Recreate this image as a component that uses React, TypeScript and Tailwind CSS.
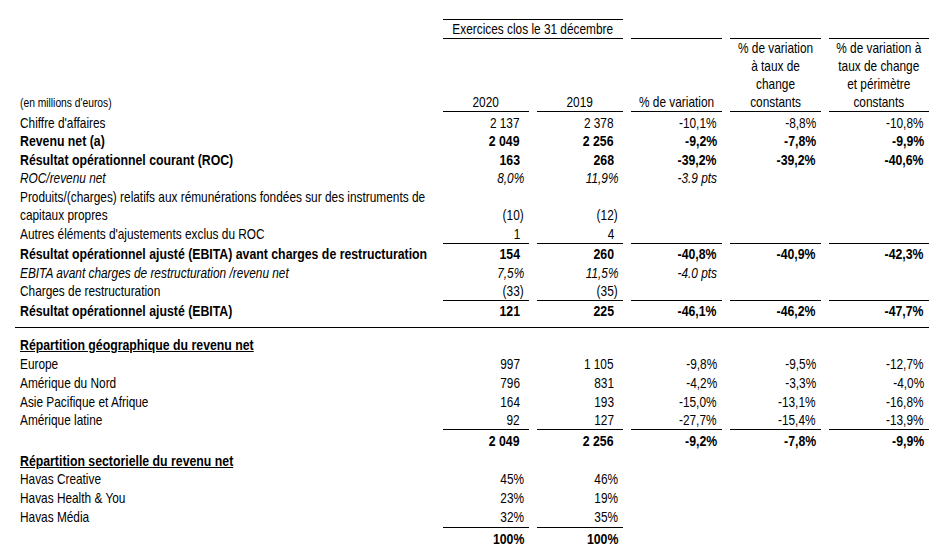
import type { ReactNode } from 'react'

type Row = {
  label: string
  values?: string[]
  h: string
  kind?: 'bold' | 'italic' | 'heading'
  line?: number
}

const topRows: Row[] = [
  { label: "Chiffre d'affaires", values: ['2 137', '2 378', '-10,1%', '-8,8%', '-10,8%'], h: 'h-[19px]' },
  { label: 'Revenu net (a)', values: ['2 049', '2 256', '-9,2%', '-7,8%', '-9,9%'], h: 'h-[18px]', kind: 'bold' },
  { label: 'Résultat opérationnel courant (ROC)', values: ['163', '268', '-39,2%', '-39,2%', '-40,6%'], h: 'h-[19px]', kind: 'bold' },
  { label: 'ROC/revenu net', values: ['8,0%', '11,9%', '-3.9 pts'], h: 'h-[18px]', kind: 'italic' },
  { label: 'Produits/(charges) relatifs aux rémunérations fondées sur des instruments de', h: 'h-[19px]' },
  { label: 'capitaux propres', values: ['(10)', '(12)'], h: 'h-[18px]' },
  { label: "Autres éléments d'ajustements exclus du ROC", values: ['1', '4'], h: 'h-[19px]' },
  {
    label: 'Résultat opérationnel ajusté (EBITA) avant charges de restructuration',
    values: ['154', '260', '-40,8%', '-40,9%', '-42,3%'],
    h: 'h-[21px]',
    kind: 'bold',
    line: 5,
  },
  { label: 'EBITA avant charges de restructuration /revenu net', values: ['7,5%', '11,5%', '-4.0 pts'], h: 'h-[18px]', kind: 'italic' },
  { label: 'Charges de restructuration', values: ['(33)', '(35)'], h: 'h-[18px]' },
  { label: 'Résultat opérationnel ajusté (EBITA)', values: ['121', '225', '-46,1%', '-46,2%', '-47,7%'], h: 'h-[21px]', kind: 'bold', line: 5 },
]

const bottomRows: Row[] = [
  { label: 'Répartition géographique du revenu net', h: 'h-[18px]', kind: 'heading' },
  { label: 'Europe', values: ['997', '1 105', '-9,8%', '-9,5%', '-12,7%'], h: 'h-[19px]' },
  { label: 'Amérique du Nord', values: ['796', '831', '-4,2%', '-3,3%', '-4,0%'], h: 'h-[19px]' },
  { label: 'Asie Pacifique et Afrique', values: ['164', '193', '-15,0%', '-13,1%', '-16,8%'], h: 'h-[19px]' },
  { label: 'Amérique latine', values: ['92', '127', '-27,7%', '-15,4%', '-13,9%'], h: 'h-[18px]' },
  { label: '', values: ['2 049', '2 256', '-9,2%', '-7,8%', '-9,9%'], h: 'h-[23px]', kind: 'bold', line: 5 },
  { label: 'Répartition sectorielle du revenu net', h: 'h-[17px]', kind: 'heading' },
  { label: 'Havas Creative', values: ['45%', '46%'], h: 'h-[19px]' },
  { label: 'Havas Health & You', values: ['23%', '19%'], h: 'h-[19px]' },
  { label: 'Havas Média', values: ['32%', '35%'], h: 'h-[20px]' },
  { label: '', values: ['100%', '100%'], h: 'h-[22px]', kind: 'bold', line: 2 },
]

const grid = 'grid grid-cols-[420px_86px_86px_91px_91px_100px] gap-x-2'

// Liberation Sans squeezed to the width of the condensed face used in the report
function Narrow({
  children,
  origin = 'origin-center',
  bold = false,
  className = '',
}: {
  children: ReactNode
  origin?: string
  bold?: boolean
  className?: string
}) {
  const squeeze = bold ? 'scale-x-[0.82]' : 'scale-x-[0.79]'
  return <span className={`inline-block whitespace-nowrap ${squeeze} ${origin} ${className}`}>{children}</span>
}

function TableRow({ row }: { row: Row }) {
  const bold = row.kind === 'bold' || row.kind === 'heading'
  const tone =
    row.kind === 'bold' ? 'font-bold' : row.kind === 'italic' ? 'italic' : row.kind === 'heading' ? 'font-bold underline' : ''
  return (
    <div className={`${grid} ${row.h}`}>
      <div className="flex items-center pl-[5px]">
        <Narrow origin="origin-left" bold={bold} className={tone}>
          {row.label}
        </Narrow>
      </div>
      {[0, 1, 2, 3, 4].map((i) => {
        const v = row.values?.[i] ?? ''
        // plain integers leave room for a closing paren, as in the source sheet
        const pad = /\d$/.test(v) ? 'pr-[9px]' : 'pr-[5px]'
        const border = row.line && i < row.line ? 'border-t border-black' : ''
        return (
          <div key={i} className={`flex items-center justify-end ${pad} ${border}`}>
            <Narrow origin="origin-right" bold={bold} className={tone}>
              {v}
            </Narrow>
          </div>
        )
      })}
    </div>
  )
}

export default function App() {
  return (
    <div className="h-[558px] w-[951px] overflow-hidden bg-white pl-[15px] pt-[19px] font-['Liberation_Sans',Arial,sans-serif] text-[15px] leading-[18px] text-black">
      {/* Header */}
      <div className={`${grid} h-[20px]`}>
        <div />
        <div className="col-span-2 flex items-center justify-center border-y border-black">
          <Narrow>Exercices clos le 31 décembre</Narrow>
        </div>
        <div className="border-b border-black" />
        <div className="border-b border-black" />
        <div className="border-b border-black" />
      </div>
      <div className={`${grid} h-[72px]`}>
        <div className="flex items-end pl-[5px] text-[13px]">
          <Narrow origin="origin-left">(en millions d'euros)</Narrow>
        </div>
        <div className="flex items-end justify-center border-b border-black">
          <Narrow>2020</Narrow>
        </div>
        <div className="flex items-end justify-center border-b border-black">
          <Narrow>2019</Narrow>
        </div>
        <div className="flex items-end justify-center border-b border-black">
          <Narrow>% de variation</Narrow>
        </div>
        <div className="flex items-end justify-center border-b border-black text-center">
          <Narrow>
            % de variation
            <br />à taux de
            <br />
            change
            <br />
            constants
          </Narrow>
        </div>
        <div className="flex items-end justify-center border-b border-black text-center">
          <Narrow>
            % de variation à
            <br />
            taux de change
            <br />
            et périmètre
            <br />
            constants
          </Narrow>
        </div>
      </div>

      <div className="h-[2px]" />
      {topRows.map((r, i) => (
        <TableRow key={i} row={r} />
      ))}

      <div className="h-[6px]" />
      <div className="h-px w-[914px] bg-black" />
      <div className="h-[8px]" />

      {bottomRows.map((r, i) => (
        <TableRow key={i} row={r} />
      ))}
    </div>
  )
}
